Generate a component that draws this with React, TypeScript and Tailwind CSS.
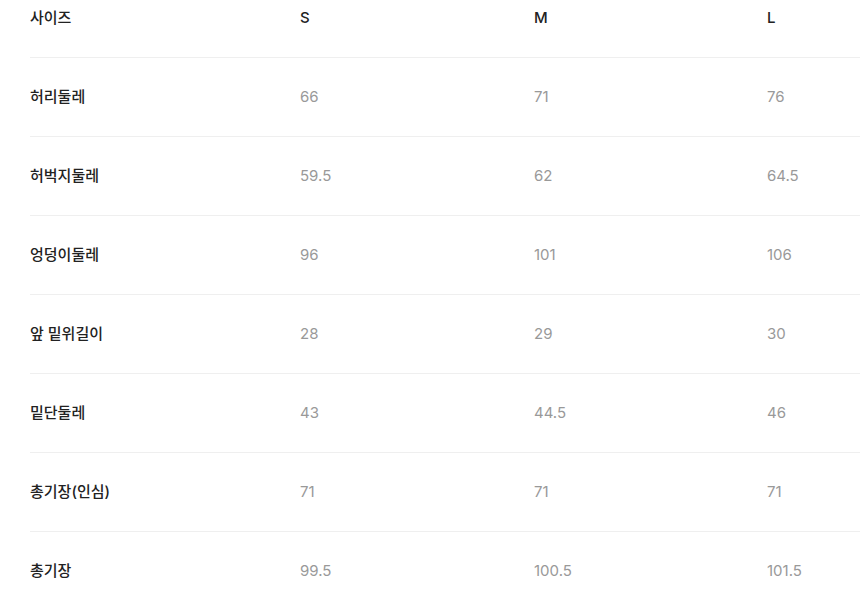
import React from "react";

const rows: [string, string, string, string][] = [
  ["허리둘레", "66", "71", "76"],
  ["허벅지둘레", "59.5", "62", "64.5"],
  ["엉덩이둘레", "96", "101", "106"],
  ["앞 밑위길이", "28", "29", "30"],
  ["밑단둘레", "43", "44.5", "46"],
  ["총기장(인심)", "71", "71", "71"],
  ["총기장", "99.5", "100.5", "101.5"],
];

export default function App() {
  return (
    <div
      className="w-[860px] h-[593px] overflow-hidden bg-white pl-[30px] text-[15px]"
      style={{ fontFamily: 'Inter, "Noto Sans CJK KR", sans-serif' }}
    >
      <div className="grid grid-cols-[270px_234px_233px_1fr] h-[58px] pt-[7px] border-b border-[#efefef] font-medium text-[#222]">
        <div>사이즈</div>
        <div>S</div>
        <div>M</div>
        <div>L</div>
      </div>
      {rows.map((r) => (
        <div
          key={r[0]}
          className="grid grid-cols-[270px_234px_233px_1fr] h-[79px] items-center border-b border-[#efefef]"
        >
          <div className="font-medium text-[#222]">{r[0]}</div>
          <div className="text-[#999]">{r[1]}</div>
          <div className="text-[#999]">{r[2]}</div>
          <div className="text-[#999]">{r[3]}</div>
        </div>
      ))}
    </div>
  );
}
